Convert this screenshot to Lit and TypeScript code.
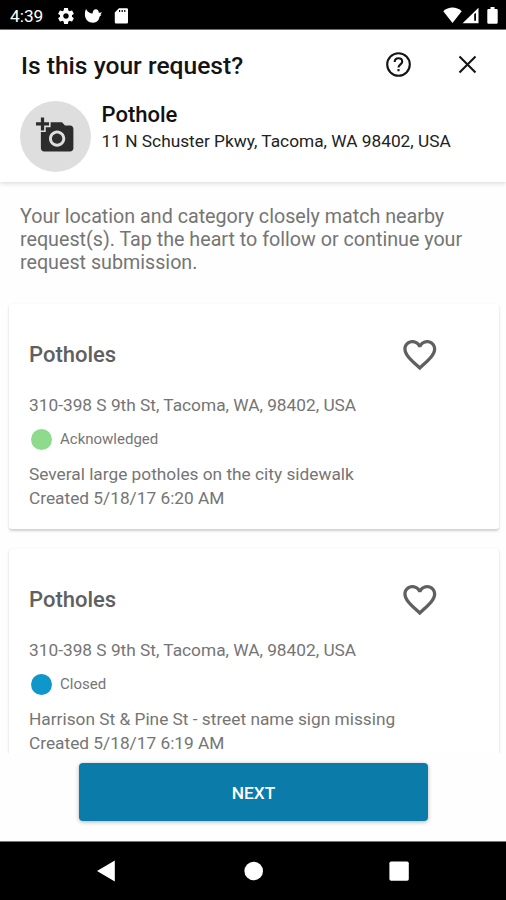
import { LitElement, html, css } from "lit";
import { customElement, property } from "lit/decorators.js";

interface RequestItem {
  title: string;
  address: string;
  status: string;
  tone: "green" | "blue";
  description: string;
  created: string;
}

const REQUESTS: RequestItem[] = [
  {
    title: "Potholes",
    address: "310-398 S 9th St, Tacoma, WA, 98402, USA",
    status: "Acknowledged",
    tone: "green",
    description: "Several large potholes on the city sidewalk",
    created: "Created 5/18/17 6:20 AM",
  },
  {
    title: "Potholes",
    address: "310-398 S 9th St, Tacoma, WA, 98402, USA",
    status: "Closed",
    tone: "blue",
    description: "Harrison St & Pine St - street name sign missing",
    created: "Created 5/18/17 6:19 AM",
  },
];

@customElement("status-bar")
export class StatusBar extends LitElement {
  static styles = css`
    :host {
      display: flex;
      align-items: center;
      box-sizing: border-box;
      height: 30px;
      padding: 2px 8px 0 10px;
      background: #000;
      border-bottom: 1px solid #777;
      color: #fff;
      font-size: 17.3px;
    }
    .time {
      width: 48px;
    }
    .icons {
      display: flex;
      align-items: center;
      gap: 10px;
      flex: 1;
    }
    svg {
      display: block;
      fill: #fff;
    }
    .system {
      display: flex;
      align-items: center;
      margin-top: -1px;
    }
    .battery {
      margin-left: 8px;
    }
  `;
  render() {
    return html`
      <span class="time">4:39</span>
      <div class="icons">
        <svg width="16" height="16" viewBox="2 2 20 20">
          <path
            d="M19.43 12.98c.04-.32.07-.64.07-.98s-.03-.66-.07-.98l2.11-1.65c.19-.15.24-.42.12-.64l-2-3.46c-.12-.22-.39-.3-.61-.22l-2.49 1c-.52-.4-1.08-.73-1.69-.98l-.38-2.65C14.46 2.18 14.25 2 14 2h-4c-.25 0-.46.18-.49.42l-.38 2.65c-.61.25-1.17.59-1.69.98l-2.49-1c-.23-.09-.49 0-.61.22l-2 3.46c-.13.22-.07.49.12.64l2.11 1.65c-.04.32-.07.65-.07.98s.03.66.07.98l-2.11 1.65c-.19.15-.24.42-.12.64l2 3.46c.12.22.39.3.61.22l2.49-1c.52.4 1.08.73 1.69.98l.38 2.65c.03.24.24.42.49.42h4c.25 0 .46-.18.49-.42l.38-2.65c.61-.25 1.17-.59 1.69-.98l2.49 1c.23.09.49 0 .61-.22l2-3.46c.12-.22.07-.49-.12-.64l-2.11-1.65zM12 15.500c-1.930 0-3.500-1.570-3.500-3.500s1.570-3.500 3.500-3.500 3.500 1.570 3.500 3.500-1.570 3.500-3.500 3.500z"
          />
        </svg>
        <svg width="18" height="16" viewBox="-0.500 0 18 16">
          <path
            d="M1.500 1C2.800 3.600 4.800 5 7.400 5.600C7.900 5.600 8.200 5 8.300 4.300C8.700 2.300 9.800 1.200 11.300 1.200C13 1.200 14 2.300 14.100 3.800C14.100 4.600 14.400 4.900 15.200 4.700L17.400 4.200C16.800 5.400 16.300 6 15.600 6.600L17 6.700C16.500 7.600 15.900 8.100 15.100 8.500C14.600 12.300 12.200 14.700 8.600 14.700C5.700 14.700 3.400 13.500 2.200 11.900C1 10.300.3 8.300.4 5.800C.4 3.900.8 2.300 1.500 1Z"
          />
        </svg>
        <svg width="17" height="16" viewBox="0 0 17 16">
          <path
            fill-rule="evenodd"
            d="M7 .2H14.800A1.200 1.200 0 0 1 16 1.400V14.300A1.200 1.200 0 0 1 14.800 15.500H4A1.200 1.200 0 0 1 2.800 14.300V4.600ZM7 2V4H8.200V2ZM9.600 2V4H10.800V2ZM12.200 2V4H13.400V2Z"
          />
        </svg>
      </div>
      <div class="system">
        <svg width="19" height="16" viewBox="0 0 19 16">
          <path d="M9.500 16L.3 4.300C5.500-.7 13.500-.7 18.700 4.300Z" />
        </svg>
        <svg width="17" height="17" viewBox="0 0 17 17">
          <path
            fill-rule="evenodd"
            d="M16.500.8V16.300H.6ZM12.200 7V13.800H14V6Z"
          />
        </svg>
        <svg class="battery" width="11" height="17" viewBox="0 0 11 17">
          <path
            d="M3.500 0H7.500V2H9.500A1.200 1.200 0 0 1 10.700 3.200V15.500A1.200 1.200 0 0 1 9.500 16.700H1.500A1.200 1.200 0 0 1 .3 15.500V3.200A1.200 1.200 0 0 1 1.500 2H3.500Z"
          />
        </svg>
      </div>
    `;
  }
}

@customElement("request-header")
export class RequestHeader extends LitElement {
  static styles = css`
    :host {
      display: block;
      box-sizing: border-box;
      height: 152px;
      padding: 0 29px 0 20px;
      background: #fff;
      box-shadow: 0 1px 5px rgba(0, 0, 0, 0.17);
      z-index: 1;
      color: #141414;
    }
    .bar {
      display: flex;
      align-items: center;
      height: 71px;
    }
    .title {
      flex: 1;
      padding-left: 1px;
      font-size: 24.6px;
      font-weight: 500;
      white-space: nowrap;
    }
    .actions {
      display: flex;
      gap: 44px;
      margin-top: -2px;
    }
    svg {
      display: block;
    }
    .stroke {
      fill: none;
      stroke: #141414;
      stroke-width: 2.1;
    }
    .summary {
      display: flex;
      gap: 10.5px;
    }
    .avatar {
      display: grid;
      place-items: center;
      width: 71px;
      height: 71px;
      border-radius: 50%;
      background: #dedede;
    }
    .avatar svg {
      fill: #2c2c2c;
    }
    .category {
      font-size: 22px;
      font-weight: 500;
      line-height: 28px;
      color: #111;
    }
    .address {
      font-size: 17.3px;
      line-height: 25px;
      white-space: nowrap;
      color: #222;
    }
  `;
  render() {
    return html`
      <div class="bar">
        <div class="title">Is this your request?</div>
        <div class="actions">
          <svg width="32" height="26" viewBox="-3 0.500 32 26" class="stroke">
            <circle cx="13.500" cy="13" r="11.300" />
            <path
              d="M9.700 10.500C9.700 8.200 11.200 6.800 13.400 6.800C15.600 6.800 17.200 8.200 17.200 10.200C17.200 12.800 13.500 12.900 13.500 16M13.500 17.600V19.800"
            />
          </svg>
          <svg width="19" height="26" viewBox="0 0.500 19 26" class="stroke">
            <path d="M1.500 5L17.500 21M17.500 5L1.500 21" />
          </svg>
        </div>
      </div>
      <div class="summary">
        <div class="avatar">
          <svg width="39" height="39" viewBox="0 0.700 24 24">
            <path
              d="M3 4V1h2v3h3v2H5v3H3V6H0V4h3zm3 6V7h3V4h7l1.830 2H21c1.100 0 2 .9 2 2v12c0 1.100-.9 2-2 2H5c-1.100 0-2-.9-2-2V10h3zm7 9c2.760 0 5-2.240 5-5s-2.240-5-5-5-5 2.240-5 5 2.240 5 5 5zm-3.200-5c0 1.770 1.430 3.200 3.200 3.200s3.200-1.430 3.200-3.200-1.430-3.200-3.200-3.200-3.200 1.430-3.200 3.200z"
            />
          </svg>
        </div>
        <div>
          <div class="category">Pothole</div>
          <div class="address">11 N Schuster Pkwy, Tacoma, WA 98402, USA</div>
        </div>
      </div>
    `;
  }
}

@customElement("request-card")
export class RequestCard extends LitElement {
  @property({ attribute: false }) item!: RequestItem;

  static styles = css`
    :host {
      display: block;
      box-sizing: border-box;
      flex: none;
      height: 225px;
      padding: 26px 20px 0;
      background: #fff;
      border-radius: 3px;
      box-shadow: 0 1.5px 2.5px rgba(0, 0, 0, 0.19);
      color: #757575;
      font-size: 17.3px;
      white-space: nowrap;
    }
    .head {
      display: flex;
      align-items: center;
      justify-content: space-between;
      height: 50px;
      padding-right: 39px;
    }
    .title {
      padding-bottom: 2px;
      font-size: 22px;
      font-weight: 500;
      color: #606060;
    }
    svg {
      display: block;
      fill: #606060;
    }
    .address {
      margin-top: 13px;
      line-height: 24px;
    }
    .status {
      display: flex;
      align-items: center;
      gap: 8px;
      height: 22px;
      margin: 11px 0 12px 2px;
      font-size: 15px;
    }
    .dot {
      width: 21px;
      height: 21px;
      border-radius: 50%;
    }
    .green {
      background: #8edb8e;
    }
    .blue {
      background: #0f96cb;
    }
    .line {
      line-height: 24px;
    }
  `;
  render() {
    const r = this.item;
    return html`
      <div class="head">
        <div class="title">${r.title}</div>
        <svg width="39.600" height="39.600" viewBox="0 0 24 24">
          <path
            d="M16.500 3c-1.740 0-3.410.81-4.500 2.090C10.910 3.810 9.240 3 7.500 3 4.420 3 2 5.420 2 8.500c0 3.780 3.400 6.860 8.550 11.540L12 21.350l1.450-1.320C18.600 15.360 22 12.280 22 8.500 22 5.420 19.580 3 16.500 3zm-4.400 15.550l-.1.100-.1-.1C7.140 14.240 4 11.390 4 8.500 4 6.500 5.500 5 7.500 5c1.540 0 3.040.99 3.570 2.360h1.870C13.460 5.990 14.960 5 16.500 5c2 0 3.500 1.500 3.500 3.500 0 2.890-3.140 5.740-7.900 10.050z"
          />
        </svg>
      </div>
      <div class="address">${r.address}</div>
      <div class="status">
        <span class="dot ${r.tone}"></span>
        <span>${r.status}</span>
      </div>
      <div class="line">${r.description}</div>
      <div class="line">${r.created}</div>
    `;
  }
}

@customElement("nav-bar")
export class NavBar extends LitElement {
  static styles = css`
    :host {
      display: flex;
      justify-content: space-between;
      align-items: center;
      box-sizing: border-box;
      height: 59px;
      padding: 0 97px 0 96px;
      background: #000;
      border-top: 1px solid #777;
    }
    svg {
      display: block;
      fill: #fff;
    }
  `;
  render() {
    return html`
      <svg width="20" height="22" viewBox="0 0 20 22">
        <path d="M18.800.6V21.400L1 11Z" />
      </svg>
      <svg width="20" height="20" viewBox="0 0 20 20">
        <circle cx="10.700" cy="10" r="9.300" />
      </svg>
      <svg width="20" height="20" viewBox="0 0 20 20">
        <rect x=".4" y=".4" width="19.400" height="19.400" rx="1.800" />
      </svg>
    `;
  }
}

@customElement("app-root")
export class AppRoot extends LitElement {
  static styles = css`
    :host {
      display: flex;
      flex-direction: column;
      width: 506px;
      height: 900px;
      overflow: hidden;
      background: #fefefe;
      font-family: Roboto, "Liberation Sans", sans-serif;
    }
    .intro {
      padding: 23px 20px 0;
      font-size: 19.700px;
      line-height: 23px;
      color: #757575;
      white-space: nowrap;
    }
    .list {
      display: flex;
      flex-direction: column;
      flex: 1;
      gap: 20px;
      min-height: 0;
      margin-top: 26px;
      padding: 4px 7px 0 9px;
      overflow: hidden;
    }
    .footer {
      height: 88px;
      box-sizing: border-box;
      padding: 10px 78px 0 79px;
    }
    .next {
      display: block;
      width: 100%;
      height: 58px;
      padding: 2px 0 0;
      border: none;
      border-radius: 4px;
      background: #0b7ba9;
      box-shadow: 0 1px 4px rgba(0, 0, 0, 0.3);
      color: #fff;
      font: 500 17.300px Roboto, "Liberation Sans", sans-serif;
    }
  `;
  render() {
    return html`
      <status-bar></status-bar>
      <request-header></request-header>
      <div class="intro">
        Your location and category closely match nearby<br />request(s). Tap the
        heart to follow or continue your<br />request submission.
      </div>
      <div class="list">
        ${REQUESTS.map((r) => html`<request-card .item=${r}></request-card>`)}
      </div>
      <div class="footer"><button class="next">NEXT</button></div>
      <nav-bar></nav-bar>
    `;
  }
}
